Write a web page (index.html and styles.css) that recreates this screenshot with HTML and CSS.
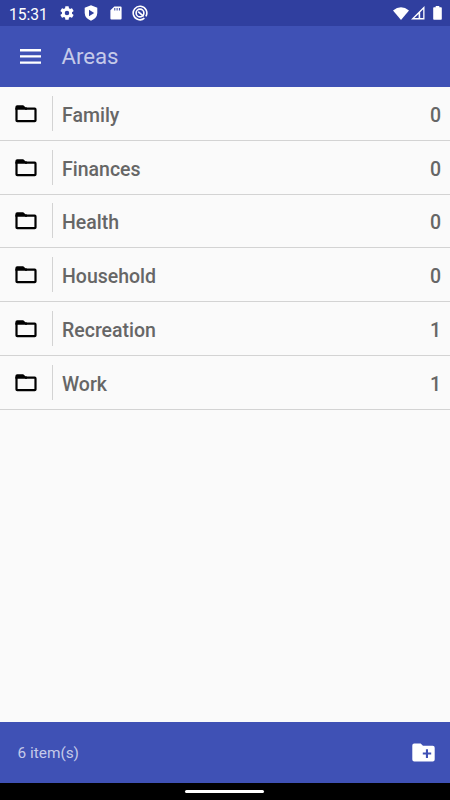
FILE: index.html
```html
<!DOCTYPE html>
<html lang="en">
<head>
<meta charset="utf-8">
<title>Areas</title>
<link rel="stylesheet" href="styles.css">
</head>
<body>
<svg class="defs" aria-hidden="true">
  <symbol id="folder" viewBox="0 0 22 18">
    <path d="M1.5 2.8V15.5Q1.5 16.2 2.3 16.2H19.7Q20.5 16.2 20.5 15.5V4.5Q20.5 3.6 19.7 3.6H10" fill="none" stroke="#000" stroke-width="2.2"/>
    <path d="M.4 4.7V2Q.4 .2 2.2 .2H8.2L10.7 2.5H12V4.7Z"/>
  </symbol>
</svg>
<div class="screen">
  <header class="status">
    <span class="clock">15:31</span>
    <svg class="gear" viewBox="2 2 20 20"><path fill-rule="evenodd" d="M19.14 12.94c.04-.3.06-.61.06-.94 0-.32-.02-.64-.07-.94l2.03-1.58a.49.49 0 0 0 .12-.61l-1.92-3.32a.488.488 0 0 0-.59-.22l-2.39.96c-.5-.38-1.03-.7-1.62-.94l-.36-2.54a.484.484 0 0 0-.48-.41h-3.84c-.24 0-.43.17-.47.41l-.36 2.54c-.59.24-1.13.57-1.62.94l-2.39-.96c-.22-.08-.47 0-.59.22L2.74 8.87c-.12.21-.08.47.12.61l2.03 1.58c-.05.3-.09.63-.09.94s.02.64.07.94l-2.03 1.58a.49.49 0 0 0-.12.61l1.92 3.32c.12.22.37.29.59.22l2.39-.96c.5.38 1.03.7 1.62.94l.36 2.54c.05.24.24.41.48.41h3.84c.24 0 .44-.17.47-.41l.36-2.54c.59-.24 1.13-.56 1.62-.94l2.39.96c.22.08.47 0 .59-.22l1.92-3.32c.12-.22.07-.47-.12-.61l-2.01-1.58zM12 15.2A3.2 3.2 0 1 1 12 8.8a3.2 3.2 0 0 1 0 6.4z"/></svg>
    <svg class="shield" viewBox="0 0 14 16"><path fill-rule="evenodd" d="M7 .3 13.3 2.8V8Q13 13.4 7 15.7 1 13.4.7 8V2.8ZM5 4.8V11.2L10.2 8Z"/></svg>
    <svg class="sd" viewBox="0 0 12 14"><path fill-rule="evenodd" d="M4.3.4H10.6Q11.6.4 11.6 1.4V12.6Q11.6 13.6 10.6 13.6H1.4Q.4 13.6.4 12.6V4.3ZM4.3 2V4.4H5.3V2ZM6.6 2V4.4H7.6V2ZM8.9 2V4.4H9.9V2Z"/></svg>
    <svg class="at" viewBox="0 0 16 16"><path d="M12.4 13.2A6.8 6.8 0 1 1 13.9 11.4" stroke-width="1.6"/><circle cx="8" cy="8" r="3.9" stroke-width="1.6"/><path d="M6.2 6.6 11.6 11.4" stroke-width="1.7"/></svg>
    <div class="system">
      <svg class="wifi" viewBox="0 0 16 13"><path d="M0 3.4Q8-2.8 16 3.4L8 13Z"/></svg>
      <svg class="signal" viewBox="0 0 14 14"><path fill-rule="evenodd" d="M13.5 0V13.5H0ZM12.2 3.2 9.2 6.2V12.1H12.2ZM7.6 7.9 3.4 12.1H7.6Z"/></svg>
      <svg class="battery" viewBox="0 0 9 14"><path d="M2.7 0H6.3V1.3H8Q8.8 1.3 8.8 2.1V13Q8.8 13.8 8 13.8H1Q.2 13.8.2 13V2.1Q.2 1.3 1 1.3H2.7Z"/></svg>
    </div>
  </header>
  <nav class="toolbar">
    <svg class="menu" viewBox="0 0 21 15"><path d="M0 0H21V2.4H0ZM0 6.2H21V8.6H0ZM0 12.4H21V14.8H0Z"/></svg>
    <h1>Areas</h1>
  </nav>
  <main class="list">
    <div class="row"><svg class="folder"><use href="#folder"/></svg><span class="name">Family</span><span class="count">0</span></div>
    <div class="row"><svg class="folder"><use href="#folder"/></svg><span class="name">Finances</span><span class="count">0</span></div>
    <div class="row"><svg class="folder"><use href="#folder"/></svg><span class="name">Health</span><span class="count">0</span></div>
    <div class="row"><svg class="folder"><use href="#folder"/></svg><span class="name">Household</span><span class="count">0</span></div>
    <div class="row"><svg class="folder"><use href="#folder"/></svg><span class="name">Recreation</span><span class="count">1</span></div>
    <div class="row"><svg class="folder"><use href="#folder"/></svg><span class="name">Work</span><span class="count">1</span></div>
  </main>
  <footer class="bottom">
    <span class="total">6 item(s)</span>
    <svg class="add" viewBox="0 0 23 19"><path fill-rule="evenodd" d="M2.2.4H8.6L11 2.7H20.7Q22.7 2.7 22.7 4.7V16.4Q22.7 18.4 20.7 18.4H2.3Q.3 18.4.3 16.4V2.4Q.3.4 2.2.4ZM13.9 6.3V9.4H10.8V11.5H13.9V14.9H16V11.5H19.2V9.4H16V6.3Z"/></svg>
  </footer>
  <div class="gesture"><div class="pill"></div></div>
</div>
</body>
</html>
```
FILE: styles.css
```css
* { box-sizing: border-box; }
body { margin: 0; font-family: Roboto, sans-serif; background: #fafafa; }
svg { display: block; flex: none; fill: #fff; }
.defs { display: none; }
.screen { width: 450px; height: 800px; display: flex; flex-direction: column; overflow: hidden; }

.status { height: 26px; flex: none; display: flex; align-items: center; background: #303f9f; color: #fff; padding: 0 8px 0 9px; }
.clock { width: 51px; font-size: 15.6px; line-height: 26px; padding-top: 3px; }
.gear { width: 14px; height: 14px; }
.shield { width: 14px; height: 16px; margin-left: 10px; }
.sd { width: 12px; height: 14px; margin-left: 12px; }
.at { width: 16px; height: 16px; margin-left: 10px; fill: none; stroke: #fff; }
.system { display: flex; align-items: center; margin-left: auto; }
.wifi { width: 16px; height: 13px; }
.signal { width: 14px; height: 14px; margin-left: 2px; }
.battery { width: 9px; height: 14px; margin-left: 8px; }

.toolbar { height: 61px; flex: none; display: flex; align-items: center; background: #3f51b5; padding-left: 20px; }
.menu { width: 21px; height: 15px; }
h1 { margin: 0 0 0 20.5px; padding-bottom: 2px; font-size: 22.2px; line-height: 28px; font-weight: 400; color: #c5cae9; }

.list { flex: 1; background: #fafafa; }
.row { height: 53.75px; display: flex; align-items: center; padding: 0 9px 0 15px; border-bottom: 1px solid #d3d3d3; color: #666; font-size: 19.5px; font-weight: 500; }
.folder { width: 22px; height: 18px; margin-top: 1px; fill: #000; }
.name { flex: 1; height: 35px; line-height: 39px; margin-left: 15px; padding-left: 9px; border-left: 1px solid #d3d3d3; }
.count { line-height: 39px; height: 35px; }

.bottom { height: 61px; flex: none; display: flex; align-items: center; justify-content: space-between; background: #3f51b5; color: #c5cae9; font-size: 15.4px; padding: 0 15px 0 17.5px; }
.total { padding-top: 2px; }
.add { width: 23px; height: 19px; }
.gesture { height: 17.5px; flex: none; background: #000; display: flex; justify-content: center; align-items: center; padding: 1px 1px 0 0; }
.pill { width: 79px; height: 3px; border-radius: 1.5px; background: #fff; }
```
